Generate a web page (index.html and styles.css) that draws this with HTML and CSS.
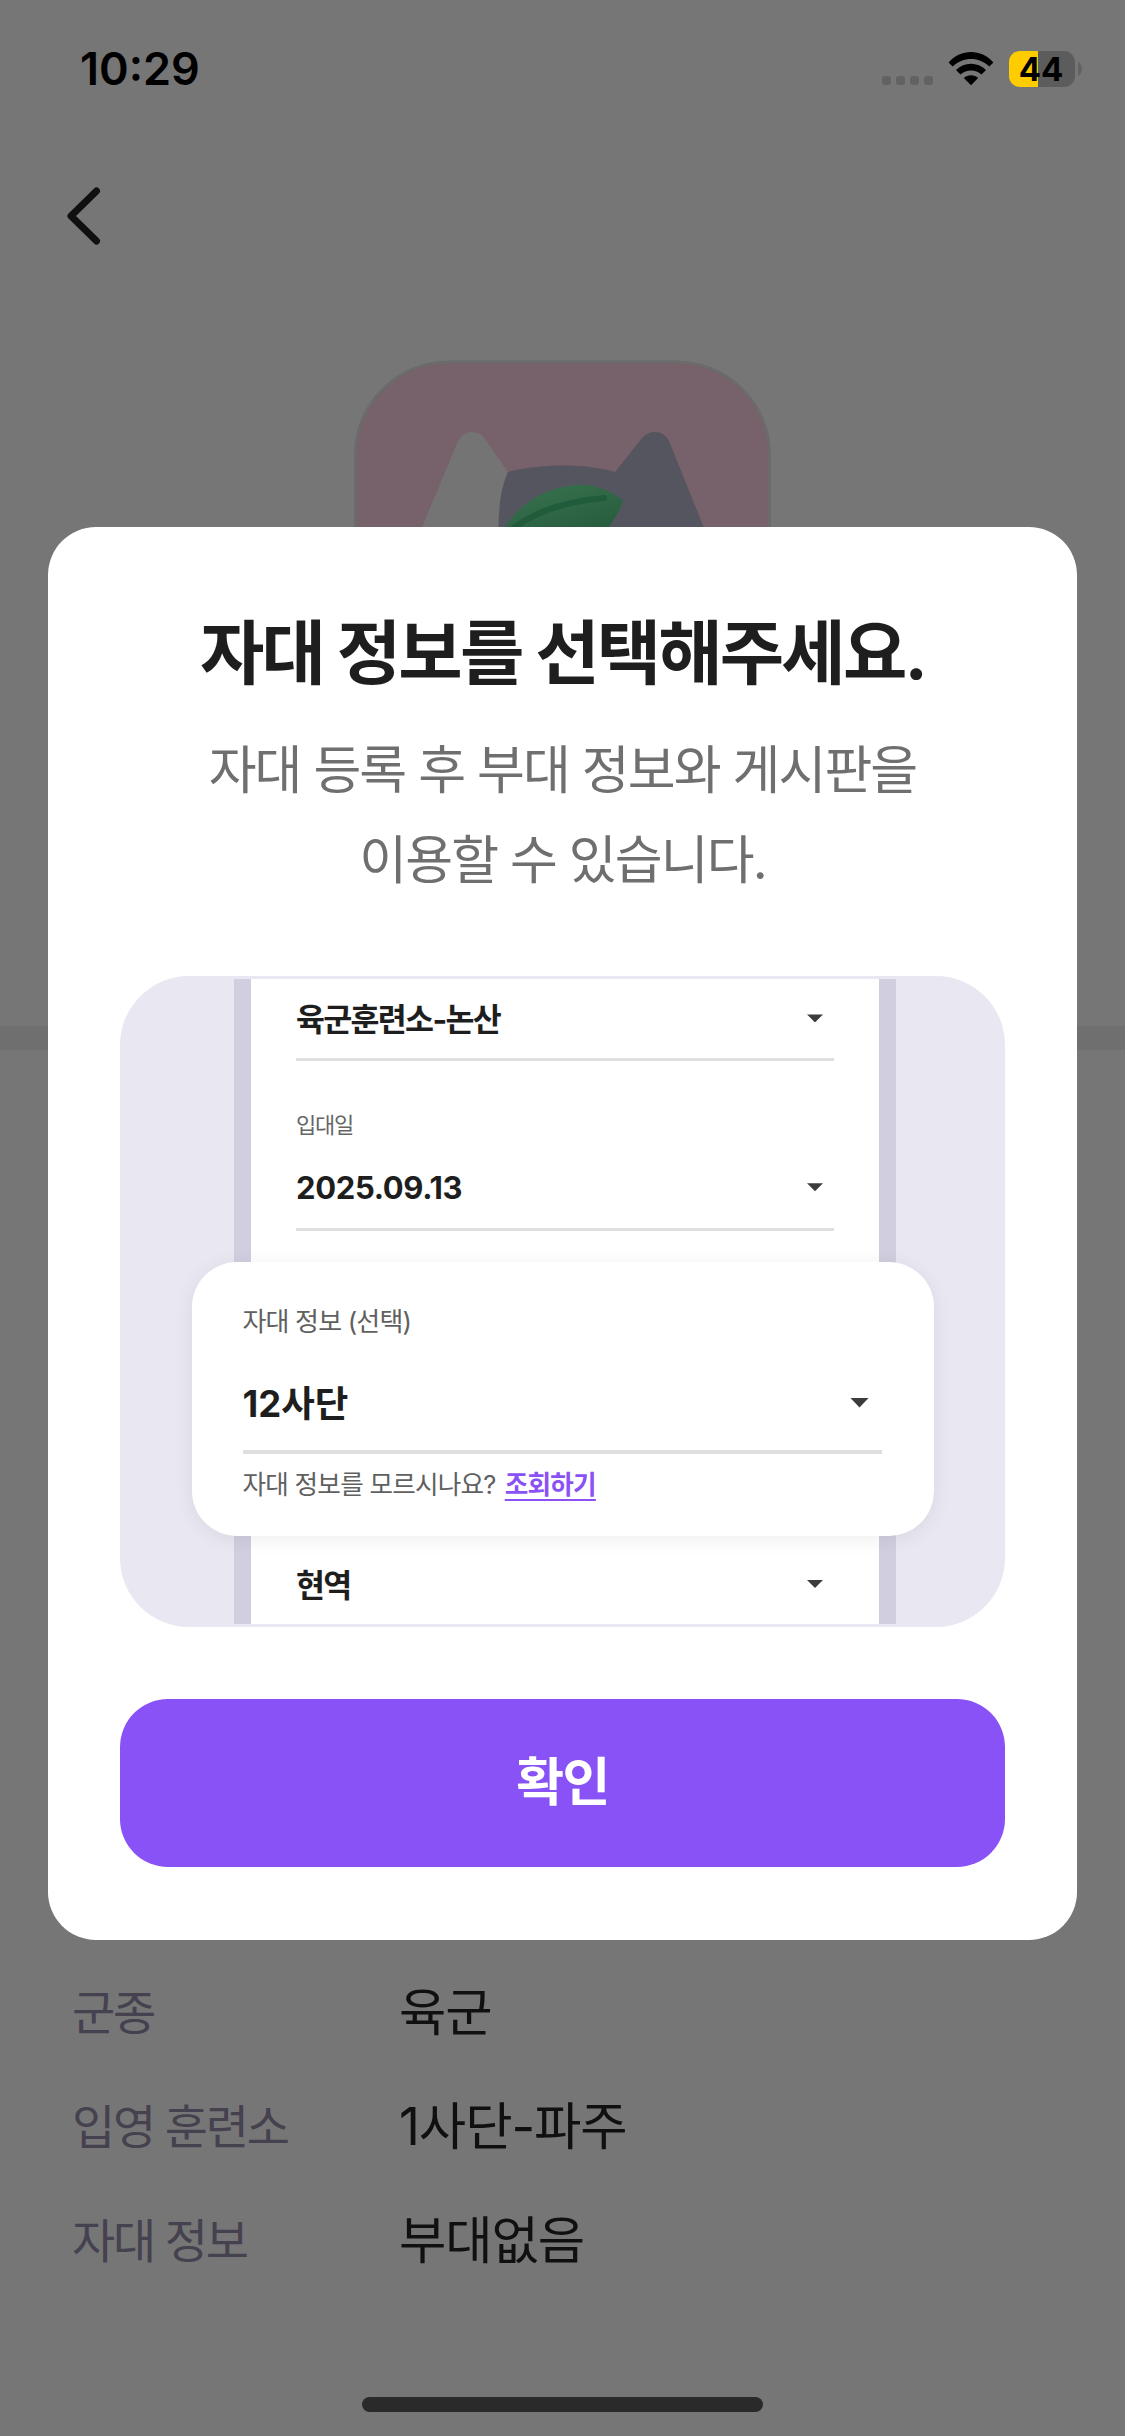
FILE: index.html
```html
<!DOCTYPE html>
<html lang="ko">
<head>
<meta charset="utf-8">
<title>자대 정보</title>
<link rel="stylesheet" href="styles.css">
</head>
<body>
<div class="screen">
  <header class="status">
    <span class="time">10:29</span>
    <div class="indicators">
      <div class="signal"><i></i><i></i><i></i><i></i></div>
      <svg class="wifi" viewBox="0 0 46 34" width="46" height="34">
        <path d="M0.6 10.4C13-3.4 33-3.4 45.4 10.4L41.3 14.6C31 4.4 15 4.4 4.7 14.6Z"/>
        <path d="M8 18C16.400 9.800 29.600 9.800 38 18L33.500 22.600C27.500 17.200 18.500 17.200 12.500 22.600Z"/>
        <path d="M15.800 26C19.800 22.400 26.200 22.400 30.200 26L23 33.200Z"/>
      </svg>
      <div class="battery"><span class="level">44</span><svg width="4" height="14" viewBox="0 0 4 14"><path d="M0 0C5.300 3 5.300 11 0 14Z" fill="#626262"/></svg></div>
    </div>
  </header>
  <nav class="nav">
    <svg width="34" height="58" viewBox="0 0 34 58"><path d="M29.500 4L4 29L29.500 54" fill="none" stroke="#101010" stroke-width="7" stroke-linecap="round" stroke-linejoin="round"/></svg>
  </nav>
  <section class="profile">
    <svg class="avatar" width="417" height="417" viewBox="0 0 417 417">
      <defs><linearGradient id="leaf" x1="0" y1="0" x2=".5" y2="1"><stop offset="0" stop-color="#3a7450"/><stop offset="1" stop-color="#23583a"/></linearGradient></defs>
      <rect x="1.500" y="2" width="414" height="414" rx="93" fill="#77616a" stroke="#6b6b6b" stroke-width="3"/>
      <path d="M68 167L104 81Q109 72 118 72Q126 72 131 79L154 112L146 170L160 250H68Z" fill="#747474"/>
      <path d="M154 112C185 104 229 103 261 112L289 77Q294 72 301 72Q310 72 315 81L352 173V250H154C142 190 141 140 154 112Z" fill="#54555e"/>
      <path d="M150 169C170 135 206 124 231 125C247 126 262 134 269 141C262 160 249 180 228 188C200 200 160 196 150 169Z" fill="url(#leaf)"/>
      <path d="M160 168C185 149 215 141 250 138" fill="none" stroke="#205c3b" stroke-width="6" stroke-linecap="round"/>
    </svg>
  </section>
  <div class="divider"></div>
  <dl class="info">
    <dt>군종</dt><dd>육군</dd>
    <dt>입영 훈련소</dt><dd>1사단-파주</dd>
    <dt>자대 정보</dt><dd>부대없음</dd>
  </dl>
  <div class="home-bar"></div>

  <div class="overlay">
    <main class="dialog">
      <h1>자대 정보를 선택해주세요.</h1>
      <p class="lead">자대 등록 후 부대 정보와 게시판을<br>이용할 수 있습니다.</p>
      <div class="preview">
        <div class="phone">
          <div class="field first"><b>육군훈련소-논산</b><i class="caret"></i></div>
          <span class="caption">입대일</span>
          <div class="field date"><b>2025.09.13</b><i class="caret"></i></div>
          <div class="field last"><b>현역</b><i class="caret"></i></div>
        </div>
        <div class="card">
          <span class="card-label">자대 정보 (선택)</span>
          <div class="card-field"><b>12사단</b><i class="caret big"></i></div>
          <div class="help">자대 정보를 모르시나요?<a class="link">조회하기</a></div>
        </div>
      </div>
      <button class="confirm">확인</button>
    </main>
  </div>
</div>
</body>
</html>
```
FILE: styles.css
```css
* { box-sizing: border-box; margin: 0; padding: 0; }
body {
  width: 1125px;
  height: 2436px;
  overflow: hidden;
  font-family: Inter, "Noto Sans CJK KR", sans-serif;
  color: #101010;
}
.screen {
  position: relative;
  display: flex;
  flex-direction: column;
  height: 2436px;
  background: #767676;
}
.status {
  display: flex;
  justify-content: space-between;
  align-items: center;
  height: 138px;
  padding: 0 43px 0 80px;
  color: #000;
}
.time { font-size: 45px; font-weight: 600; line-height: 54px; }
.indicators { display: flex; align-items: center; }
.signal { display: flex; gap: 5px; margin: 23px 15px 0 0; }
.signal i { width: 9px; height: 9px; border-radius: 3px; background: #626262; }
.wifi { margin-right: 15px; }
.battery { display: flex; align-items: center; gap: 3px; }
.level {
  width: 66px;
  height: 36px;
  padding-right: 2px;
  border-radius: 11px;
  background: linear-gradient(90deg, #fc0 29px, #5c5c5c 29px);
  font-size: 33px;
  font-weight: 700;
  line-height: 36px;
  text-align: center;
}
.nav { height: 222px; padding: 49px 0 0 67px; }
.nav svg, .avatar { display: block; }
.profile { display: flex; justify-content: center; height: 666px; }
.divider { height: 24px; background: #6f6f6f; }
.info {
  display: grid;
  grid-template-columns: 327px 1fr;
  grid-auto-rows: 114px;
  align-items: center;
  padding: 0 72px;
  margin-top: 902px;
}
.info dt { font-size: 47px; letter-spacing: -2.300px; color: #45414f; }
.info dd { padding-bottom: 2px; font-size: 51.500px; letter-spacing: -1.100px; }
.home-bar {
  width: 401px;
  height: 15px;
  margin: 103px auto 0;
  border-radius: 8px;
  background: #2a2a2a;
}
.overlay {
  position: absolute;
  inset: 0;
  padding: 526.500px 48px 0;
}
.dialog {
  display: flex;
  flex-direction: column;
  height: 1413px;
  padding: 75px 72px 72px;
  border-radius: 48px;
  background: #fff;
}
h1 {
  font-size: 70px;
  font-weight: 700;
  line-height: 104px;
  letter-spacing: -2.850px;
  text-align: center;
  color: #1e1e1e;
}
.lead {
  margin-top: 20px;
  font-size: 52px;
  line-height: 90px;
  letter-spacing: -1.850px;
  text-align: center;
  color: #6f6f6f;
}
.preview {
  display: flex;
  justify-content: center;
  position: relative;
  width: 885px;
  height: 651.500px;
  margin-top: 70px;
  padding: 3px 0 3px 5px;
  border-radius: 69px;
  background: #e9e7f1;
  color: #1e1e1e;
}
.phone {
  display: flex;
  flex-direction: column;
  width: 662px;
  padding: 0 45px;
  border: solid #d1cee0;
  border-width: 0 17px;
  background: #fff;
}
.field {
  display: flex;
  justify-content: space-between;
  align-items: center;
  padding-right: 11px;
  border-bottom: 3px solid #dfdfdf;
  font-size: 31.500px;
  letter-spacing: -1.700px;
}
.field b { margin-bottom: 3px; }
.field.first { height: 83px; }
.field.date { height: 89px; padding-top: 4px; font-size: 31px; letter-spacing: -.350px; }
.field.date b { margin-bottom: 0; }
.field.last { height: 80px; margin-top: 313px; border: 0; }
.caption {
  margin-top: 47px;
  font-size: 22px;
  line-height: 34px;
  letter-spacing: -1.200px;
  color: #666;
}
.caret {
  width: 16px;
  height: 8px;
  background: #3c3c3c;
  clip-path: polygon(0 0, 100% 0, 50% 100%);
}
.caret.big { width: 19px; height: 10px; margin-bottom: 1px; }
.card {
  position: absolute;
  left: 71.500px;
  top: 286px;
  width: 742.500px;
  height: 274px;
  padding: 40px 52px 0 51px;
  border-radius: 45px;
  background: #fff;
  box-shadow: 0 3px 20px rgba(0, 0, 0, .07);
}
.card-label {
  display: block;
  font-size: 26px;
  line-height: 40px;
  letter-spacing: -.850px;
  color: #606060;
}
.card-field {
  display: flex;
  justify-content: space-between;
  align-items: center;
  height: 112px;
  padding: 15px 13px 0 0;
  border-bottom: 4px solid #dedede;
  font-size: 36.500px;
  letter-spacing: 0;
}
.card-field b { margin-bottom: 4px; }
.help {
  margin-top: 11px;
  font-size: 25.600px;
  line-height: 40px;
  letter-spacing: -.750px;
  color: #606060;
}
.link {
  margin-left: 9px;
  font-weight: 700;
  color: #8a52f5;
  text-decoration: underline;
  text-decoration-thickness: 2px;
  text-underline-offset: 5px;
}
.confirm {
  height: 168px;
  margin-top: 72px;
  border: 0;
  border-radius: 48px;
  background: #8952f7;
  color: #fff;
  font: 700 52px/168px Inter, "Noto Sans CJK KR", sans-serif;
  letter-spacing: -1.500px;
}
```
